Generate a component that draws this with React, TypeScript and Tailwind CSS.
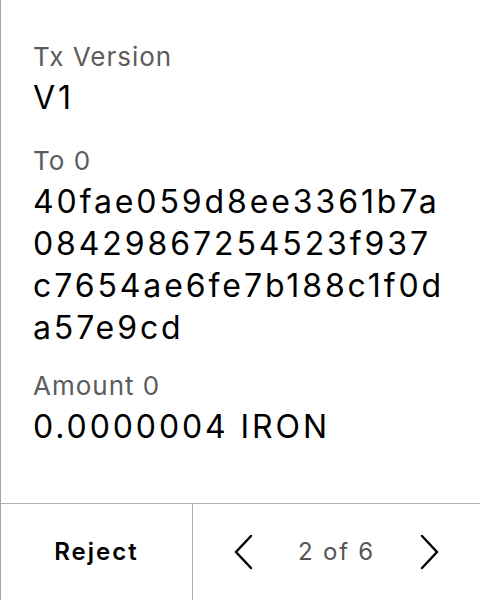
const font = { fontFamily: "Inter, 'Noto Sans', sans-serif" };

function Field({ label, value, className = "" }: { label: string; value: React.ReactNode; className?: string }) {
  return (
    <div className={`flex flex-col ${className}`}>
      <div className="text-[26px] leading-[34px] tracking-[1px] text-[#5c5c5c]">{label}</div>
      <div className="mt-[3px] text-[32px] leading-[42px] tracking-[2.9px] text-black">{value}</div>
    </div>
  );
}

function Chevron({ dir }: { dir: "left" | "right" }) {
  return (
    <svg width="20" height="36" viewBox="0 0 20 36" fill="none" stroke="currentColor" strokeWidth="2.4" strokeLinecap="round" strokeLinejoin="miter">
      {dir === "left" ? <polyline points="17,2 2,18 17,34" /> : <polyline points="3,2 18,18 3,34" />}
    </svg>
  );
}

export default function App() {
  return (
    <div style={font} className="flex h-[600px] w-[480px] flex-col border-l border-[#a8a8a8] bg-white">
      <div className="flex flex-1 flex-col pl-[32px] pr-2 pt-[40px]">
        <Field label="Tx Version" value="V1" />
        <Field
          className="mt-[25px]"
          label="To 0"
          value={
            <>
              40fae059d8ee3361b7a
              <br />
              08429867254523f937
              <br />
              c7654ae6fe7b188c1f0d
              <br />
              a57e9cd
            </>
          }
        />
        <Field className="mt-[20px]" label="Amount 0" value="0.0000004 IRON" />
      </div>
      <div className="flex h-[97px] border-t border-[#b0b0b0]">
        <div className="flex w-[192px] items-center justify-center border-r border-[#b0b0b0] text-[24px] font-semibold tracking-[2px] text-black">
          Reject
        </div>
        <div className="flex flex-1 items-center justify-between pl-[41px] pr-[41px] text-black">
          <Chevron dir="left" />
          <span className="text-[24px] tracking-[1.8px] text-[#555]">2 of 6</span>
          <Chevron dir="right" />
        </div>
      </div>
    </div>
  );
}
